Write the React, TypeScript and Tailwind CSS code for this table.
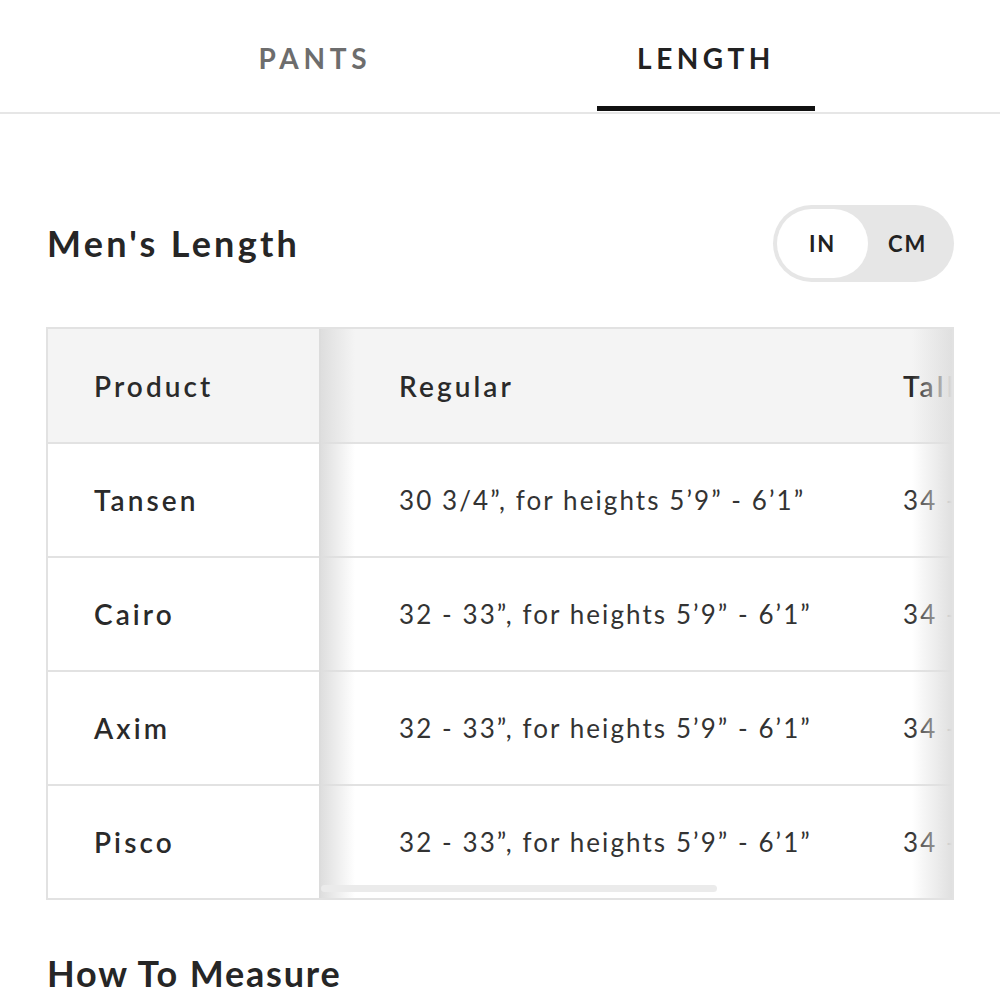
import React from "react";

const rows = [
  { name: "Tansen", regular: "30 3/4\u201D, for heights 5\u20199\u201D - 6\u20191\u201D", tall: "34 - 35\u201D" },
  { name: "Cairo", regular: "32 - 33\u201D, for heights 5\u20199\u201D - 6\u20191\u201D", tall: "34 - 35\u201D" },
  { name: "Axim", regular: "32 - 33\u201D, for heights 5\u20199\u201D - 6\u20191\u201D", tall: "34 - 35\u201D" },
  { name: "Pisco", regular: "32 - 33\u201D, for heights 5\u20199\u201D - 6\u20191\u201D", tall: "34 - 35\u201D" },
];

export default function App() {
  return (
    <div className="w-[1000px] h-[1000px] overflow-hidden bg-white text-[#2a2a2a] font-['Lato','Noto_Sans',sans-serif]">
      {/* tabs */}
      <div className="flex h-[114px] border-b-2 border-[#e6e6e6]">
        <div className="ml-[206px] w-[218px] flex justify-center pt-[40px]">
          <span className="text-[28px] leading-[36px] font-bold tracking-[0.17em] text-[#6d6d6d]">PANTS</span>
        </div>
        <div className="ml-[173px] w-[218px] flex flex-col items-center pt-[40px]">
          <span className="text-[28px] leading-[36px] font-bold tracking-[0.16em] text-[#222]">LENGTH</span>
          <span className="mt-auto mb-[1px] h-[5px] w-full bg-[#111]" />
        </div>
      </div>

      <div className="px-[46px]">
        {/* title + unit toggle */}
        <div className="flex items-center justify-between mt-[91px] h-[76px]">
          <h1 className="text-[36px] font-bold tracking-[0.09em] text-[#262626] pl-[1px]">Men's Length</h1>
          <div className="flex items-center w-[181px] h-[77px] rounded-full bg-[#e6e6e6] p-[4px]">
            <div className="w-[91px] h-[69px] rounded-full bg-white flex items-center justify-center text-[22px] font-bold tracking-[0.08em] text-[#222]">
              IN
            </div>
            <div className="flex-1 flex items-center justify-center text-[22px] font-bold tracking-[0.08em] text-[#222] pr-[3px]">
              CM
            </div>
          </div>
        </div>

        {/* table */}
        <div className="mt-[46px] w-[908px] border-2 border-[#e2e2e2] flex">
          <div className="w-[273px] shrink-0 border-r-2 border-[#dcdcdc]">
            <div className="h-[113px] bg-[#f4f4f4] flex items-center pl-[46px] text-[28px] font-semibold tracking-[0.11em] text-[#2a2a2a]">
              Product
            </div>
            {rows.map((r) => (
              <div key={r.name} className="h-[114px] border-t-2 border-[#e2e2e2] flex items-center pl-[46px] text-[28px] font-semibold tracking-[0.11em] text-[#2a2a2a]">
                {r.name}
              </div>
            ))}
          </div>

          <div className="relative flex-1 overflow-hidden">
            <div className="w-[900px]">
              <div className="h-[113px] bg-[#f4f4f4] flex items-center text-[28px] font-semibold tracking-[0.11em] text-[#2a2a2a]">
                <div className="w-[582px] shrink-0 pl-[78px]">Regular</div>
                <div>Tall</div>
              </div>
              {rows.map((r) => (
                <div key={r.name} className="h-[114px] border-t-2 border-[#e2e2e2] flex items-center text-[26px] tracking-[0.08em] text-[#333]">
                  <div className="w-[582px] shrink-0 pl-[78px]">{r.regular}</div>
                  <div className="whitespace-nowrap">{r.tall}</div>
                </div>
              ))}
            </div>
            <div className="absolute left-0 top-0 bottom-0 w-[34px] bg-gradient-to-r from-[#dedede] to-transparent" />
            <div className="absolute right-0 top-0 bottom-0 w-[40px] bg-gradient-to-r from-transparent to-[#e0e0e0]" />
            <div className="absolute left-0 bottom-[6px] w-[396px] h-[7px] rounded-full bg-[#ebebeb]" />
          </div>
        </div>

        <h2 className="mt-[46px] text-[36px] font-bold tracking-[0.05em] text-[#262626] pl-[1px]">How To Measure</h2>
      </div>
    </div>
  );
}
